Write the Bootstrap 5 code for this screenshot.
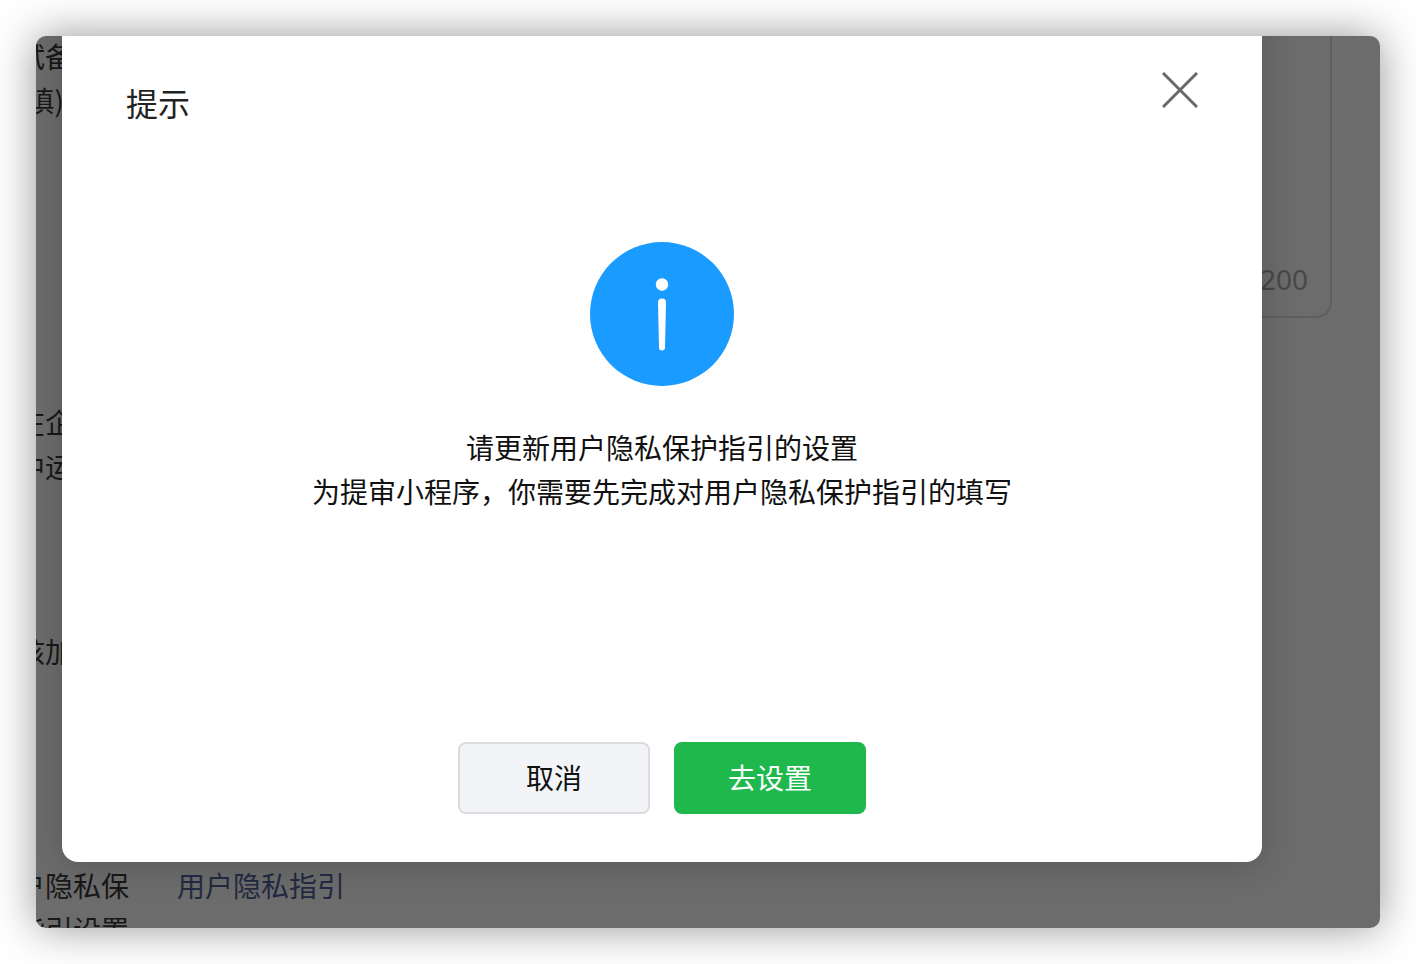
<!DOCTYPE html>
<html lang="zh-CN">
<head>
<meta charset="utf-8">
<meta name="viewport" content="width=device-width, initial-scale=1">
<title>提示</title>
<link href="https://cdn.jsdelivr.net/npm/bootstrap@5.3.0/dist/css/bootstrap.min.css" rel="stylesheet">
<style>
  body {
    font-family: "Noto Sans CJK SC", sans-serif;
    font-size: 28px;
    line-height: 44px;
    color: #181818;
    background: #fff;
    padding: 36px;
  }
  .app-window {
    display: grid;
    grid-template: minmax(0, 1fr) / minmax(0, 1fr);
    height: calc(100vh - 72px);
    border-radius: 10px;
    background: #6c6c6c;
    box-shadow: 0 0 44px rgba(0, 0, 0, .42);
  }
  .layer { grid-area: 1 / 1; }
  .form-layer { margin: -2px 0 0 -47px; padding-right: 48px; }
  .form-line { gap: 48px; }
  .form-name { width: 140px; flex: none; }
  .line-remark { height: 366px; }
  .line-company { height: 229px; }
  .line-urgent { height: 234px; }
  .remark-box { height: 314px; margin-top: -30px; }
  .remark-box textarea {
    background: transparent;
    border: 2px solid #5e5e5e;
    border-radius: 16px;
    resize: none;
  }
  .counter { right: 24px; bottom: 17px; color: #484848; font-family: "Noto Sans", sans-serif; }
  .guide-link { color: #222a42; text-decoration: none; }
  .dialog {
    z-index: 1;
    margin: -30px 118px 66px 26px;
    padding: 74px 64px 48px;
    background: #fff;
    border-radius: 16px;
    box-shadow: 0 2px 36px rgba(0, 0, 0, .2);
  }
  .dialog-title { font-size: 32px; line-height: 44px; font-weight: 400; color: #222; }
  .close-x { border: 0; background: none; padding: 0; width: 36px; height: 36px; margin-top: -8px; }
  .dialog-text { margin: 39px 0 0; color: #111; }
  .info-icon { margin-top: 118px; }
  .dialog-btn {
    width: 192px;
    height: 72px;
    padding: 0 0 2px;
    border-width: 2px;
    border-radius: 8px;
    font-size: 28px;
    line-height: 44px;
  }
  .btn-plain { background: #f3f4f7; border-color: #dadcdf; color: #111; }
  .btn-go { background: #1eb84d; border-color: #1eb84d; color: #fff; }
</style>
</head>
<body>
<main class="app-window overflow-hidden">
  <form class="layer form-layer">
    <div class="form-line line-remark d-flex">
      <label class="form-name" for="remark">测试备注<br>(选填)</label>
      <div class="remark-box position-relative flex-grow-1">
        <textarea id="remark" class="w-100 h-100 d-block"></textarea>
        <span class="counter position-absolute">0/200</span>
      </div>
    </div>
    <div class="form-line line-company d-flex"><span class="form-name">否在企<br>业中运</span></div>
    <div class="form-line line-urgent d-flex"><span class="form-name">审核加</span></div>
    <div class="form-line d-flex">
      <span class="form-name">用户隐私保护指引设置</span>
      <a href="#" class="guide-link">用户隐私指引</a>
    </div>
  </form>

  <section class="layer dialog d-flex flex-column" role="dialog" aria-labelledby="dialog-title">
    <header class="d-flex justify-content-between align-items-start">
      <h1 class="dialog-title mb-0" id="dialog-title">提示</h1>
      <button type="button" class="close-x" aria-label="关闭">
        <svg class="d-block" width="36" height="36" viewBox="0 0 36 36" fill="none" stroke="#686a69" stroke-width="3"><path d="M1 1 35 35M35 1 1 35"/></svg>
      </button>
    </header>
    <div class="text-center">
      <svg class="info-icon d-block mx-auto" width="144" height="144" viewBox="0 0 144 144" aria-hidden="true">
        <circle cx="72" cy="72" r="72" fill="#1a9bff"/>
        <circle cx="72" cy="42.500" r="6.200" fill="#fff"/>
        <path fill="#fff" d="M68 60.500a4 4 0 0 1 8 0L75 105.500a3 3 0 0 1-6 0Z"/>
      </svg>
      <p class="dialog-text">请更新用户隐私保护指引的设置<br>为提审小程序，你需要先完成对用户隐私保护指引的填写</p>
    </div>
    <footer class="d-flex justify-content-center gap-4 mt-auto">
      <button type="button" class="btn dialog-btn btn-plain">取消</button>
      <button type="button" class="btn dialog-btn btn-go">去设置</button>
    </footer>
  </section>
</main>
<script src="https://cdn.jsdelivr.net/npm/bootstrap@5.3.0/dist/js/bootstrap.bundle.min.js"></script>
</body>
</html>
